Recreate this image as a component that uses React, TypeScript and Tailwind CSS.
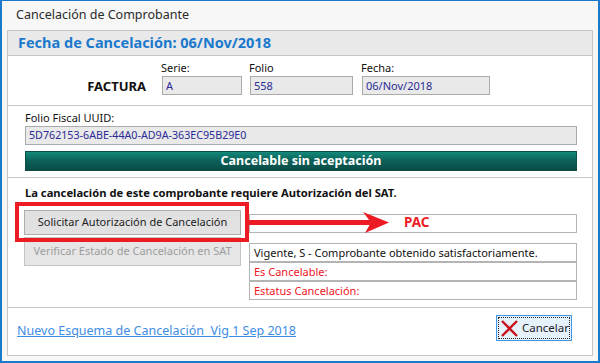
import React from "react";

const inputCls =
  "h-[19px] border border-[#ababab] bg-[#e9e9e9] px-[3px] flex items-center text-[#2b2b96] leading-none";
const boxCls = "h-[19px] border border-[#b4b4b4] bg-white px-[4px] flex items-center leading-none";

export default function App() {
  return (
    <div className="w-[600px] h-[363px] bg-[#f7f7f7] border-t border-l-2 border-r-2 border-b-2 border-[#1979ca] flex flex-col font-['Noto_Sans',sans-serif] text-[11px] text-[#111] overflow-hidden">
      {/* title */}
      <div className="h-[29px] pl-[14px] flex items-center text-[12.5px] text-[#2a2a2a]">
        Cancelación de Comprobante
      </div>

      {/* panel */}
      <div className="ml-[5px] mr-[5px] h-[326px] border border-[#c6c6c6] bg-white flex flex-col">
        {/* header */}
        <div className="h-[25px] shrink-0 bg-[#e9e9e9] border-b border-[#c6c6c6] pl-[10px] flex items-center text-[14.5px] font-bold text-[#1b79cd]">
          Fecha de Cancelación: 06/Nov/2018
        </div>

        {/* section 1 */}
        <div className="h-[50px] shrink-0 border-b border-[#c6c6c6] pt-[4px] flex items-start">
          <div className="w-[153px] pr-[15px] mt-[17px] h-[19px] flex items-center justify-end text-[13px] font-bold">
            FACTURA
          </div>
          <div className="flex flex-col">
            <div className="h-[16px] leading-[16px]">Serie:</div>
            <div className={inputCls + " ml-[1px] w-[80px]"}>A</div>
          </div>
          <div className="flex flex-col ml-[7px]">
            <div className="h-[16px] leading-[16px]">Folio</div>
            <div className={inputCls + " ml-[1px] w-[103px]"}>558</div>
          </div>
          <div className="flex flex-col ml-[8px]">
            <div className="h-[16px] leading-[16px]">Fecha:</div>
            <div className={inputCls + " ml-[1px] w-[128px]"}>06/Nov/2018</div>
          </div>
        </div>

        {/* section 2 */}
        <div className="h-[72px] shrink-0 border-b border-[#c6c6c6] pt-[4px] pl-[17px] pr-[15px] flex flex-col">
          <div className="h-[16px] leading-[16px]">Folio Fiscal UUID:</div>
          <div className={inputCls + " text-[10.7px]"}>5D762153-6ABE-44A0-AD9A-363EC95B29E0</div>
          <div className="mt-[6px] h-[20px] border border-[#0b4d47] bg-gradient-to-b from-[#13897a] via-[#0c6058] to-[#0a4d47] flex items-center justify-center text-white font-bold text-[12.5px] leading-none">
            Cancelable sin aceptación
          </div>
        </div>

        {/* section 3 */}
        <div className="relative h-[130px] shrink-0 border-b border-[#c6c6c6] pt-[7px] flex flex-col">
          <div className="pl-[17px] h-[16px] leading-[16px] font-bold text-[11.2px]">
            La cancelación de este comprobante requiere Autorización del SAT.
          </div>
          <div className="mt-[9px] pl-[16px] flex items-start gap-[8px]">
            <div className="w-[217px] flex flex-col gap-[2px]">
              <div className="h-[25px] border border-[#adadad] bg-[#e1e1e1] flex items-center justify-center text-[#222]">
                Solicitar Autorización de Cancelación
              </div>
              <div className="h-[29px] border border-[#c4c4c4] bg-[#e6e6e6] flex items-center justify-center text-[#9d9d9d]">
                Verificar Estado de Cancelación en SAT
              </div>
            </div>
            <div className="mt-[4px] w-[328px] flex flex-col">
              <div className={boxCls}></div>
              <div className={boxCls + " mt-[10px]"}>Vigente, S - Comprobante obtenido satisfactoriamente.</div>
              <div className={boxCls + " text-[#f0141e]"}>Es Cancelable:</div>
              <div className={boxCls + " text-[#f0141e]"}>Estatus Cancelación:</div>
            </div>
          </div>

          {/* annotations */}
          <div className="absolute left-[7px] top-[24px] w-[234px] h-[40px] border-4 border-[#ed1c24]"></div>
          <svg className="absolute left-[232px] top-[22px]" width="160" height="40" viewBox="0 0 160 40">
            <rect x="8" y="20" width="126" height="5" fill="#ed1c24" />
            <polygon points="123,12 149,22.5 125,33 131,22.5" fill="#ed1c24" />
          </svg>
          <div className="absolute left-[396px] top-[34px] h-[20px] leading-[20px] text-[13.5px] font-bold text-[#ed1c24]">
            PAC
          </div>
        </div>

        {/* section 4 */}
        <div className="flex-1 flex items-start justify-between pl-[9px] pr-[20px]">
          <a className="mt-[14px] text-[12.5px] leading-[18px] text-[#3e8ce3] underline" href="#">
            Nuevo Esquema de Cancelación&nbsp; Vig 1 Sep 2018
          </a>
          <div className="mt-[7px] w-[76px] h-[26px] border border-[#3f95e6] bg-[#e5f1fb] p-[1px]">
            <div className="w-full h-full border border-dotted border-[#222] flex items-center gap-[4px] pl-[2px]">
              <svg width="17" height="17" viewBox="0 0 17 17">
                <line x1="1" y1="1" x2="16" y2="16" stroke="#c8101a" strokeWidth="2.4" />
                <line x1="16" y1="1" x2="1" y2="16" stroke="#c8101a" strokeWidth="2.4" />
              </svg>
              <span className="text-[#222] text-[11.5px]">Cancelar</span>
            </div>
          </div>
        </div>
      </div>
    </div>
  );
}
